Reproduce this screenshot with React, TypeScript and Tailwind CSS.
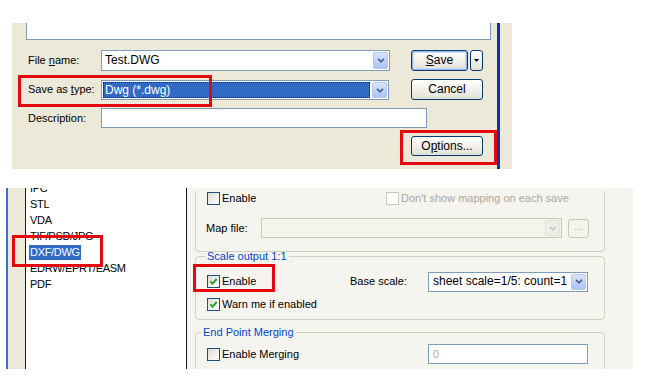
import React from 'react';

function Chevron({ color }: { color: string }) {
  return (
    <svg width="8" height="5" viewBox="0 0 8 5">
      <path d="M1 0.8l3 3 3-3" fill="none" stroke={color} strokeWidth="1.7" />
    </svg>
  );
}

function DropBtn({ disabled }: { disabled?: boolean }) {
  return (
    <div
      className={
        disabled
          ? 'w-[15px] h-full flex items-center justify-center rounded-[2px] border border-[#E2E0D6] bg-[#EFEEE8]'
          : 'w-[15px] h-full flex items-center justify-center rounded-[2px] border border-[#B4C8F4] bg-gradient-to-b from-[#D9E4FE] to-[#ABC3F6]'
      }
    >
      <Chevron color={disabled ? '#C9C7BA' : '#4D6185'} />
    </div>
  );
}

function Check({ checked, disabled }: { checked?: boolean; disabled?: boolean }) {
  return (
    <span
      className={
        disabled
          ? 'w-[13px] h-[13px] shrink-0 border border-[#CAC8BB] bg-white flex items-center justify-center'
          : 'w-[13px] h-[13px] shrink-0 border border-[#1C5180] bg-gradient-to-br from-[#DCDCD7] to-white flex items-center justify-center'
      }
    >
      {checked && (
        <svg width="9" height="9" viewBox="0 0 9 9">
          <path d="M1.3 4.3l2.2 2.3 4.2-4.6" fill="none" stroke="#21A121" strokeWidth="1.9" />
        </svg>
      )}
    </span>
  );
}

function XpButton({ children, def, w }: { children: React.ReactNode; def?: boolean; w: string }) {
  return (
    <div
      className={`${w} h-full rounded-[3px] border border-[#003C74] bg-gradient-to-b from-white to-[#E3E1D6] flex items-center justify-center text-black ${
        def ? 'shadow-[inset_0_0_0_1px_#9DB9EB,inset_0_0_0_2px_#C9DAF8]' : ''
      }`}
    >
      {children}
    </div>
  );
}

function RedBox({ cls }: { cls: string }) {
  return <div className={`absolute border-[3px] border-[#E4080F] ${cls}`} />;
}

const listItems = ['IPC', 'STL', 'VDA', 'TIF/PSD/JPG', 'DXF/DWG', 'EDRW/EPRT/EASM', 'PDF'];

export default function App() {
  return (
    <div className="relative w-[651px] h-[389px] overflow-hidden bg-white text-[11px] leading-[13px] text-black font-['Liberation_Sans',Arial,sans-serif]">
      {/* Save dialog fragment */}
      <div className="ml-[12px] mt-[23px] w-[500px] h-[146px] bg-[#ECE9D8] flex">
        <div className="w-[485px] pl-[14px]">
          <div className="w-[465px] h-[17px] bg-white border-x border-b border-[#7F9DB9]" />

          <div className="mt-[10px] h-[21px] flex items-center">
            <span className="w-[75px] pl-[2px]">
              File <span className="underline">n</span>ame:
            </span>
            <div className="w-[289px] h-full border border-[#7F9DB9] bg-white flex items-center p-[1px]">
              <span className="flex-1 pl-[2px] text-[12px]">Test.DWG</span>
              <DropBtn />
            </div>
            <div className="ml-[21px] h-full flex">
              <XpButton w="w-[57px]" def>
                <span className="text-[12px]">
                  <span className="underline">S</span>ave
                </span>
              </XpButton>
              <div className="ml-[2px] w-[13px] h-full rounded-[3px] border border-[#003C74] bg-gradient-to-b from-white to-[#E3E1D6] flex items-center justify-center">
                <svg width="5" height="3" viewBox="0 0 5 3">
                  <path d="M0 0h5L2.5 3z" fill="#000" />
                </svg>
              </div>
            </div>
          </div>

          <div className="mt-[8px] h-[21px] flex items-center">
            <span className="w-[75px] pl-[2px]">
              Save as <span className="underline">t</span>ype:
            </span>
            <div className="w-[288px] h-[20px] mt-[1px] border border-[#7F9DB9] bg-white flex items-center p-[1px]">
              <div className="flex-1 h-full bg-[#316AC5] border border-dotted border-[#0B1E45] flex items-center pl-[1px] text-white text-[12px] mr-[2px]">
                Dwg (*.dwg)
              </div>
              <DropBtn />
            </div>
            <div className="ml-[22px] h-full">
              <XpButton w="w-[72px]">
                <span className="text-[12px]">Cancel</span>
              </XpButton>
            </div>
          </div>

          <div className="mt-[8px] h-[20px] flex items-center">
            <span className="w-[75px] pl-[2px]">Description:</span>
            <div className="w-[326px] h-full border border-[#7F9DB9] bg-white" />
          </div>

          <div className="mt-[8px] h-[20px] flex">
            <div className="ml-[385px] h-full">
              <XpButton w="w-[72px]">
                <span className="text-[12px]">
                  O<span className="underline">p</span>tions...
                </span>
              </XpButton>
            </div>
          </div>
        </div>
        <div className="w-[3px] bg-[#0A36A6]" />
        <div className="flex-1" />
      </div>

      {/* Options dialog fragment */}
      <div className="mt-[19px] h-[181px] flex overflow-hidden">
        <div className="w-[6px] bg-white" />
        <div className="w-[2px] bg-[#3A6FD8]" />
        <div className="w-[17px] bg-[#ECE9D8]" />
        <div className="w-[1px] bg-[#1A1A1A]" />
        <div className="w-[160px] bg-white overflow-hidden">
          <div className="-mt-[8px] flex flex-col tracking-[-0.3px]">
            {listItems.map((item) => (
              <div key={item} className="h-[16px] flex items-center">
                <span
                  className={
                    item === 'DXF/DWG'
                      ? 'ml-[3px] px-[1px] h-[15px] flex items-center bg-[#316AC5] text-white'
                      : 'ml-[3px] px-[1px] h-[15px] flex items-center'
                  }
                >
                  {item}
                </span>
              </div>
            ))}
          </div>
        </div>
        <div className="w-[1px] bg-[#1A1A1A]" />
        <div className="w-[446px] bg-[#F5F4EF] pl-[8px] overflow-hidden">
          {/* group 1 (top clipped) */}
          <div className="w-[410px] h-[61px] border-x border-b border-[#D0D0BF] rounded-b-[4px]">
            <div className="mt-[3px] h-[14px] flex items-center">
              <div className="w-[190px] pl-[11px] flex items-center gap-[2px]">
                <Check />
                <span>Enable</span>
              </div>
              <Check disabled />
              <span className="ml-[2px] text-[#ACA899]">Don't show mapping on each save</span>
            </div>
            <div className="mt-[13px] h-[20px] flex items-center">
              <span className="w-[65px] pl-[10px]">Map file:</span>
              <div className="w-[301px] h-full border border-[#C9C7BA] bg-[#F5F4EA] flex justify-end p-[1px]">
                <DropBtn disabled />
              </div>
              <div className="ml-[6px] w-[21px] h-[19px] rounded-[3px] border border-[#C9C7BA] bg-[#F5F4EA] flex items-center justify-center text-[#ACA899] text-[10px] leading-[10px] pb-[3px]">
                ...
              </div>
            </div>
          </div>

          {/* group 2 */}
          <fieldset className="-mt-[2px] w-[410px] border border-[#D0D0BF] rounded-[4px] pb-[8px]">
            <legend className="ml-[9px] px-[2px] h-[13px] leading-[13px] text-[#0046D5]">Scale output 1:1</legend>
            <div className="mt-[8px] h-[21px] flex items-center">
              <div className="w-[154px] pl-[11px] flex items-center gap-[2px]">
                <Check checked />
                <span>Enable</span>
              </div>
              <span className="w-[78px]">Base scale:</span>
              <div className="w-[160px] h-[20px] border border-[#7F9DB9] bg-white flex items-center p-[1px]">
                <span className="flex-1 pl-[3px] text-[12px]">sheet scale=1/5: count=1</span>
                <DropBtn />
              </div>
            </div>
            <div className="mt-[6px] h-[13px] pl-[11px] flex items-center gap-[2px]">
              <Check checked />
              <span>Warn me if enabled</span>
            </div>
          </fieldset>

          {/* group 3 */}
          <fieldset className="mt-[6px] w-[410px] border border-[#D0D0BF] rounded-[4px] pb-[10px]">
            <legend className="ml-[5px] px-[2px] h-[13px] leading-[13px] text-[#0046D5]">End Point Merging</legend>
            <div className="mt-[5px] h-[20px] flex items-center">
              <div className="w-[232px] pl-[11px] flex items-center gap-[2px]">
                <Check />
                <span>Enable Merging</span>
              </div>
              <div className="w-[160px] h-full border border-[#7F9DB9] bg-white flex items-center pl-[4px] text-[#ACA899]">
                0
              </div>
            </div>
          </fieldset>
        </div>
      </div>

      {/* red annotation frames */}
      <RedBox cls="left-[18px] top-[75px] w-[194px] h-[32px]" />
      <RedBox cls="left-[400px] top-[130px] w-[97px] h-[35px]" />
      <RedBox cls="left-[12px] top-[235px] w-[91px] h-[32px]" />
      <RedBox cls="left-[193px] top-[264px] w-[82px] h-[28px]" />
    </div>
  );
}
